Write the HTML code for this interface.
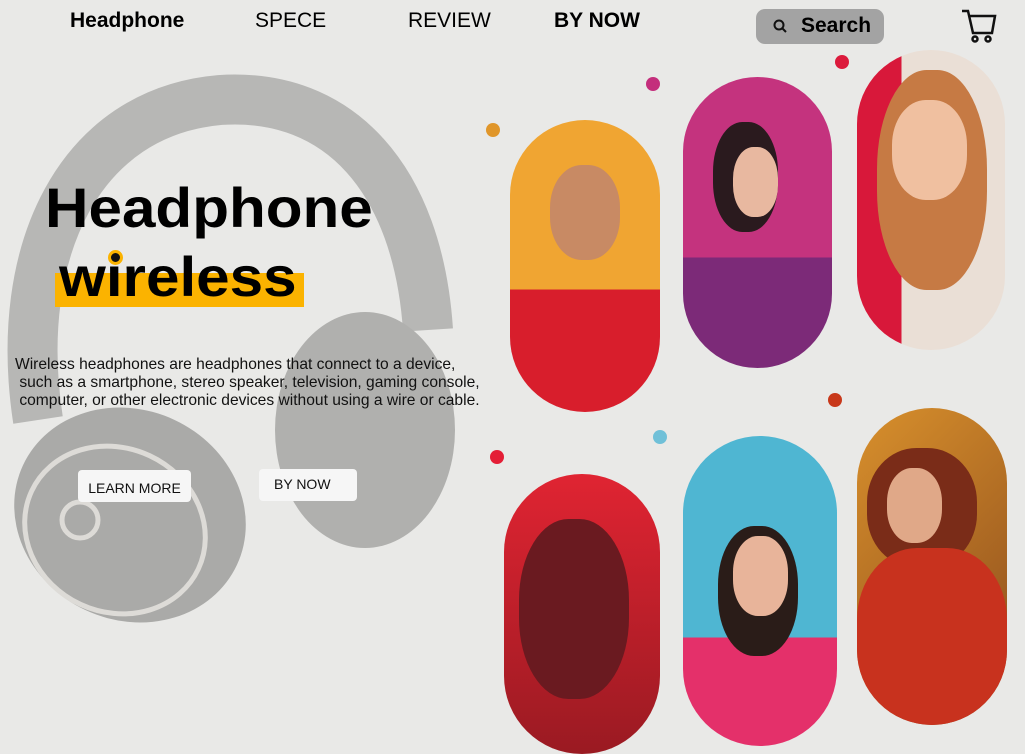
<!DOCTYPE html>
<html><head><meta charset="utf-8"><style>
*{margin:0;padding:0;box-sizing:border-box}
body{width:1025px;height:739px;overflow:hidden;background:#e9e9e7;font-family:"Liberation Sans",sans-serif;position:relative}
.t{position:absolute;white-space:nowrap}
.pill{position:absolute;border-radius:80px;overflow:hidden}
.dot{position:absolute;width:14px;height:14px;border-radius:50%}
.btn{position:absolute;background:#f6f6f6;border-radius:4px;font-size:14px;color:#111;padding-top:10px;text-align:center}
</style></head><body>
<svg style="position:absolute;left:0;top:0" width="500" height="739">
<path d="M38 420 C12 250 80 112 220 100 C340 92 418 180 428 330" fill="none" stroke="#b7b7b5" stroke-width="50"/>
<ellipse cx="365" cy="430" rx="90" ry="118" fill="#b0b0ae"/>
<ellipse cx="130" cy="515" rx="118" ry="105" transform="rotate(25 130 515)" fill="#aaaaa8"/>
<ellipse cx="115" cy="530" rx="92" ry="82" transform="rotate(25 115 530)" fill="none" stroke="#dddbd7" stroke-width="5"/>
<circle cx="80" cy="520" r="18" fill="none" stroke="#dddbd7" stroke-width="5"/>
</svg>
<div class="t" style="left:70px;top:9px;font-size:21px;font-weight:bold">Headphone</div>
<div class="t" style="left:255px;top:9px;font-size:21px">SPECE</div>
<div class="t" style="left:408px;top:9px;font-size:21px">REVIEW</div>
<div class="t" style="left:554px;top:9px;font-size:21px;font-weight:bold">BY NOW</div>
<div style="position:absolute;left:756px;top:9px;width:128px;height:35px;background:#a3a3a3;border-radius:9px"></div>
<svg style="position:absolute;left:772px;top:18px" width="16" height="16"><circle cx="7" cy="7" r="4.5" fill="none" stroke="#111" stroke-width="2"/><path d="M10 10l4 4" stroke="#111" stroke-width="2"/></svg>
<div class="t" style="left:801px;top:14px;font-size:21px;font-weight:bold">Search</div>
<svg style="position:absolute;left:960px;top:8px" width="38" height="36" fill="none" stroke="#111" stroke-width="2.5"><path d="M2 3h6l5 22h19l3-17H10"/><circle cx="15" cy="31" r="2.5"/><circle cx="28" cy="31" r="2.5"/></svg>
<div style="position:absolute;left:55px;top:273px;width:249px;height:34px;background:#fbb300"></div>
<div class="t" style="left:45px;top:175px;font-size:56px;font-weight:bold;transform:scaleX(1.075);transform-origin:0 0">Headphone</div>
<div class="t" style="left:59px;top:244px;font-size:56px;font-weight:bold;transform:scaleX(1.075);transform-origin:0 0">wireless</div>
<div style="position:absolute;left:108px;top:250px;width:15px;height:15px;border-radius:50%;background:#111;border:3px solid #fbb300"></div>
<div class="t" style="left:15px;top:356px;font-size:15.6px;line-height:18px;color:#111">Wireless headphones are headphones that connect to a device,<br>&nbsp;such as a smartphone, stereo speaker, television, gaming console,<br>&nbsp;computer, or other electronic devices without using a wire or cable.</div>
<div class="btn" style="left:78px;top:470px;width:113px;height:32px">LEARN MORE</div>
<div class="btn" style="left:259px;top:469px;width:98px;height:32px;text-align:left;padding-left:15px;padding-top:7px">BY NOW</div>

<div class="pill" style="left:510px;top:120px;width:150px;height:292px;background:linear-gradient(#f0a532 0 58%,#d81e2c 58%)">
<div style="position:absolute;left:40px;top:45px;width:70px;height:95px;border-radius:45%;background:#c88a64"></div></div>
<div class="pill" style="left:683px;top:77px;width:149px;height:291px;background:linear-gradient(#c4337e 0 62%,#7c2a78 62%)">
<div style="position:absolute;left:30px;top:45px;width:65px;height:110px;border-radius:45%;background:#2a1a1e"></div>
<div style="position:absolute;left:50px;top:70px;width:45px;height:70px;border-radius:45%;background:#e8b8a0"></div></div>
<div class="pill" style="left:857px;top:50px;width:148px;height:300px;background:linear-gradient(90deg,#d8183a 0 30%,#eadfd6 30%)">
<div style="position:absolute;left:20px;top:20px;width:110px;height:220px;border-radius:45%;background:#c67a44"></div>
<div style="position:absolute;left:35px;top:50px;width:75px;height:100px;border-radius:45%;background:#f0c0a0"></div></div>
<div class="pill" style="left:504px;top:474px;width:156px;height:280px;background:linear-gradient(#e02432,#9a1a22)">
<div style="position:absolute;left:15px;top:45px;width:110px;height:180px;border-radius:45%;background:#6a1a20"></div></div>
<div class="pill" style="left:683px;top:436px;width:154px;height:310px;background:linear-gradient(#4fb6d2 0 65%,#e4306a 65%)">
<div style="position:absolute;left:35px;top:90px;width:80px;height:130px;border-radius:45%;background:#2a1c18"></div>
<div style="position:absolute;left:50px;top:100px;width:55px;height:80px;border-radius:45%;background:#e8b49a"></div></div>
<div class="pill" style="left:857px;top:408px;width:150px;height:317px;background:linear-gradient(135deg,#d8902c,#8a4a1c)">
<div style="position:absolute;left:10px;top:40px;width:110px;height:120px;border-radius:45%;background:#7a2c18"></div>
<div style="position:absolute;left:30px;top:60px;width:55px;height:75px;border-radius:45%;background:#e0a888"></div>
<div style="position:absolute;left:0;top:140px;width:150px;height:180px;border-radius:40% 40% 0 0;background:#c8321e"></div></div>

<div class="dot" style="left:646px;top:77px;background:#c42e7c"></div>
<div class="dot" style="left:835px;top:55px;background:#dc1a3c"></div>
<div class="dot" style="left:486px;top:123px;background:#e0962a"></div>
<div class="dot" style="left:828px;top:393px;background:#c8381a"></div>
<div class="dot" style="left:653px;top:430px;background:#70c0d8"></div>
<div class="dot" style="left:490px;top:450px;background:#e41e36"></div>
</body></html>
